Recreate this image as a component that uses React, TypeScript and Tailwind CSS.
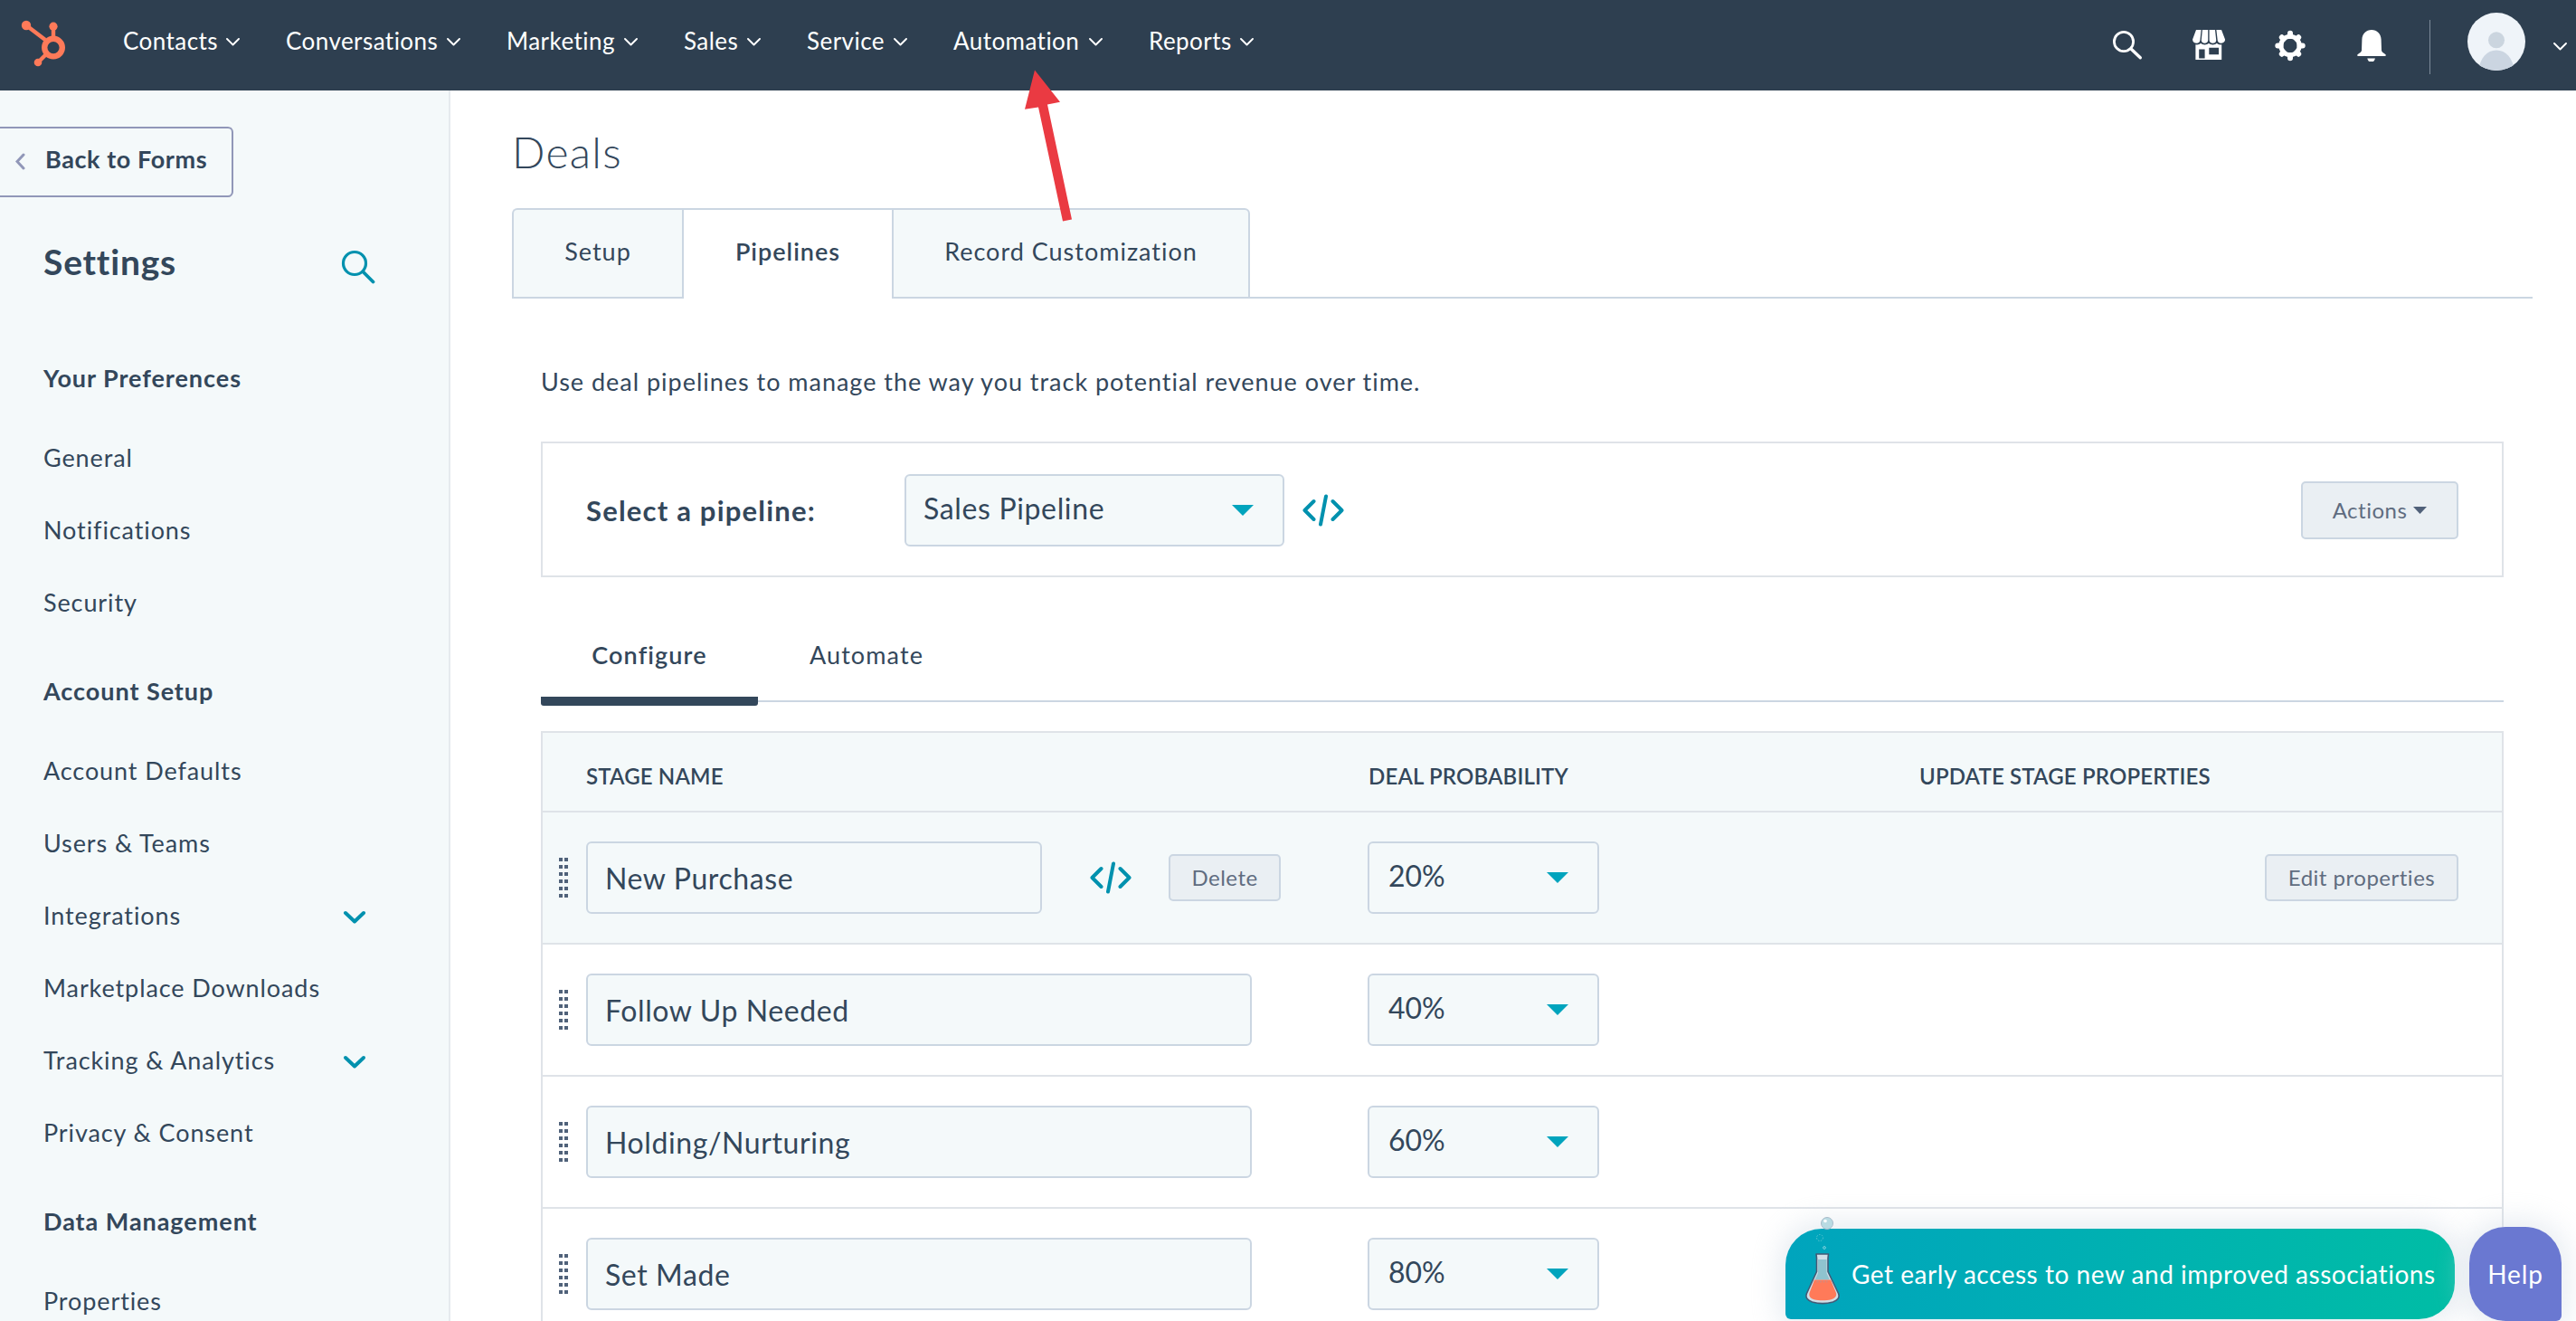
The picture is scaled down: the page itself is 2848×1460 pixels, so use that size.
import { ReactNode } from 'react';

const navItems = [
    { label: 'Contacts', className: 'w-[129px]' },
    { label: 'Conversations', className: 'w-[193px]' },
    { label: 'Marketing', className: 'w-[145px]' },
    { label: 'Sales', className: 'w-[85px]' },
    { label: 'Service', className: 'w-[111px]' },
    { label: 'Automation', className: 'w-[165px]' },
    { label: 'Reports', className: 'w-[116px]' },
];

const sidebarSections = [
    {
        title: 'Your Preferences',
        items: [{ label: 'General' }, { label: 'Notifications' }, { label: 'Security' }],
    },
    {
        title: 'Account Setup',
        items: [
            { label: 'Account Defaults' },
            { label: 'Users & Teams' },
            { label: 'Integrations', expandable: true },
            { label: 'Marketplace Downloads' },
            { label: 'Tracking & Analytics', expandable: true },
            { label: 'Privacy & Consent' },
        ],
    },
    {
        title: 'Data Management',
        items: [{ label: 'Properties' }],
    },
];

const stages = [
    { name: 'New Purchase', probability: '20%', active: true },
    { name: 'Follow Up Needed', probability: '40%', active: false },
    { name: 'Holding/Nurturing', probability: '60%', active: false },
    { name: 'Set Made', probability: '80%', active: false },
];

function Logo() {
    return (
        <svg className="h-[56px] w-[56px] shrink-0" viewBox="0 0 56 56" fill="none">
            <g stroke="#ff7a59" strokeWidth="4.4">
                <path d="M9 8 30 24" />
                <path d="M39 9v12" />
                <path d="m22 49 8-8" />
            </g>
            <circle cx="39" cy="32.6" r="9.8" stroke="#ff7a59" strokeWidth="6.4" />
            <circle cx="9" cy="8" r="5.2" fill="#ff7a59" />
            <circle cx="39" cy="9.2" r="4.6" fill="#ff7a59" />
            <circle cx="22" cy="49" r="4.3" fill="#ff7a59" />
        </svg>
    );
}

function NavChevron() {
    return (
        <svg className="mt-[3px] h-[9px] w-[15px] shrink-0" viewBox="0 0 15 9" fill="none" stroke="#fff" strokeWidth="1.9" strokeLinecap="round" strokeLinejoin="round">
            <path d="m1 1 6.5 6.5L14 1" />
        </svg>
    );
}

function StoreIcon() {
    return (
        <svg className="size-[36px]" viewBox="0 0 36 36">
            <path
                fill="#fff"
                d="M4 1h5.6L8.4 12.5c-.2 1.8-1.6 3.3-3.6 3.3-2.8 0-4.9-1.8-4.7-4.4zM10.9 1h6.3v11.3c0 2-1.5 3.5-3.7 3.5-2.3 0-3.8-1.5-3.7-3.5zM18.6 1h6.4l1.2 11.3c.1 2-1.5 3.5-3.8 3.5s-3.8-1.5-3.8-3.5zM26.4 1H32l4 10.4c.3 2.6-2 4.4-4.6 4.4-2 0-3.5-1.5-3.7-3.3z"
            />
            <path
                fill="#fff"
                fillRule="evenodd"
                d="M3.4 17.3c2.3.4 4.3-.1 5.7-1.6 2.3 2.3 6.6 2.3 8.9 0 2.3 2.3 6.6 2.3 8.9 0 1.4 1.5 3.4 2 5.3 1.6V34H3.4zM7.2 22.4V32.6h6.4V22.4zM18.3 20.8v7.4H29v-7.4z"
            />
        </svg>
    );
}

function GearIcon() {
    return (
        <svg className="size-[36px]" viewBox="0 0 36 36" fill="none" stroke="#fff">
            <circle cx="18" cy="18.5" r="10.2" strokeWidth="5" />
            <path
                d="M18 8V4.8M18 29v3.2M7.5 18.5H4.3M28.5 18.5h3.2M10.6 11.1 8.8 9.3M25.4 11.1l1.8-1.8M10.6 25.9l-1.8 1.8M25.4 25.9l1.8 1.8"
                strokeWidth="6"
                strokeLinecap="round"
            />
        </svg>
    );
}

function BellIcon() {
    return (
        <svg className="size-[36px]" viewBox="0 0 36 36" fill="#fff">
            <path d="M18 1c6 0 10.4 4.4 10.6 10.5L29 23.500c.1 1.3.7 2 1.8 2.8l2.4 1.800c1.2 1 .8 1.900-.6 1.900H3.400c-1.400 0-1.800-.9-.6-1.900l2.400-1.800c1.100-.8 1.700-1.500 1.800-2.800l.4-12C7.600 5.400 12 1 18 1z" />
            <path d="M13.300 32.400h8.600c-.4 2.400-2 4.200-4.300 4.200s-3.900-1.800-4.300-4.200z" />
        </svg>
    );
}

function Avatar() {
    return (
        <svg className="size-[64px] shrink-0" viewBox="0 0 64 64">
            <clipPath id="avatar">
                <circle cx="32" cy="32" r="32" />
            </clipPath>
            <g clipPath="url(#avatar)">
                <rect width="64" height="64" fill="#eff4f9" />
                <circle cx="32" cy="30.3" r="9" fill="#cbd5df" />
                <path d="M12 64c2-14 9.5-22.6 20-22.6S50 50 52 64z" fill="#cbd5e1" />
            </g>
        </svg>
    );
}

function CodeIcon() {
    return (
        <svg className="h-[36px] w-[46px] shrink-0" viewBox="0 0 46 36" fill="none" stroke="#0091ae" strokeWidth="4" strokeLinecap="round" strokeLinejoin="round">
            <path d="M12.5 8 2.5 18l10 10M33.5 8l10 10-10 10M26 2.5l-6 31" />
        </svg>
    );
}

function Triangle() {
    return (
        <svg className="h-[12px] w-[24px] shrink-0" viewBox="0 0 24 12" fill="#00a4bd">
            <path d="M0 0h24L12 12z" />
        </svg>
    );
}

function DragHandle() {
    return (
        <div className="grid shrink-0 grid-cols-2 gap-x-[2px] gap-y-1">
            {Array.from({ length: 12 }, (_, i) => (
                <span key={i} className="h-1 w-1 bg-[#50627a]" />
            ))}
        </div>
    );
}

function Flask() {
    return (
        <svg className="-mt-[30px] h-[100px] w-[40px] shrink-0" viewBox="0 0 40 100">
            <circle cx="25" cy="9" r="6.5" fill="#b9dbe3" stroke="#a9bccb" strokeWidth="1" />
            <circle cx="23" cy="6.5" r="1.8" fill="#fff" />
            <circle cx="17" cy="25" r="3.5" fill="none" stroke="#5cc4d3" strokeWidth="1" strokeDasharray="1.5 1.5" />
            <circle cx="22" cy="36" r="1.4" fill="none" stroke="#7fd0dc" strokeWidth="1" />
            <path
                d="M13 43h13.500l-.5 4.500v15l11.500 24c2 5-1.500 8-6 9.500-7 2-16 2-23 0-4.500-1.500-8-4.500-6-9.500l11-24v-15z"
                fill="#cfdfe8"
                stroke="#425b76"
                strokeWidth="1.6"
                strokeLinejoin="round"
            />
            <path d="M15 49h9.5v15l3.500 7.500H11.500L15 64z" fill="#8fc3cf" />
            <path d="M11 71.500h18l6 14.500c1 4-2 6.300-5.500 7.200-5.500 1.300-13.500 1.300-19 0C7 92.300 4.500 90 5.500 86z" fill="#ff7a59" />
            <path d="M13.500 73.500h12" stroke="#d9877a" strokeWidth="2" strokeDasharray="2 1.5" />
        </svg>
    );
}

function Header() {
    return (
        <header className="flex h-[100px] shrink-0 items-center bg-[#2e3f50] pr-[10px] pl-5 text-white">
            <div className="flex h-full items-start pt-5">
                <Logo />
            </div>
            <nav className="ml-[60px] flex items-center gap-[51px] pb-[11px]">
                {navItems.map((item) => (
                    <div key={item.label} className={`flex items-center justify-between whitespace-nowrap ${item.className}`}>
                        <span className="text-[26px] leading-10 tracking-[0.45px]">{item.label}</span>
                        <NavChevron />
                    </div>
                ))}
            </nav>
            <div className="ml-auto flex items-center gap-[54px]">
                <svg className="size-[36px]" viewBox="0 0 36 36" fill="none" stroke="#fff" strokeLinecap="round">
                    <circle cx="14" cy="14" r="10.6" strokeWidth="2.8" />
                    <path d="m22.3 22.3 10 9.5" strokeWidth="3.4" />
                </svg>
                <StoreIcon />
                <GearIcon />
                <BellIcon />
            </div>
            <div className="mt-1 ml-[46px] h-[60px] w-px bg-[#7c8a99]" />
            <div className="ml-[41px] pb-2">
                <Avatar />
            </div>
            <div className="ml-[31px]">
                <NavChevron />
            </div>
        </header>
    );
}

function Sidebar() {
    return (
        <aside className="w-[498px] shrink-0 border-r-2 border-[#e6eaee] bg-[#f4f9fa] pt-10">
            <button className="flex h-[78px] w-[258px] items-center rounded-r-[6px] border-2 border-l-0 border-[#9197b8] pb-[5px] pl-[17px] text-[27px] font-bold tracking-[0.6px] whitespace-nowrap">
                <svg className="mt-1 mr-[22px] h-[19px] w-[11px] shrink-0" viewBox="0 0 11 19" fill="none" stroke="#9197b8" strokeWidth="3" strokeLinecap="round">
                    <path d="M9 2 2 9.5 9 17" />
                </svg>
                Back to Forms
            </button>
            <div className="mt-[41px] flex h-[60px] items-center justify-between pr-[81px] pl-12">
                <h1 className="text-[39px] leading-[60px] font-bold tracking-[0.8px]">Settings</h1>
                <svg className="mt-3 size-[38px]" viewBox="0 0 38 38" fill="none" stroke="#0091ae" strokeLinecap="round">
                    <circle cx="15" cy="15" r="12.5" strokeWidth="3.2" />
                    <path d="m24.5 24.5 11 11" strokeWidth="3.8" />
                </svg>
            </div>
            <div className="mt-[59px] pr-[91px] pl-12 text-[27px] leading-[80px]">
                {sidebarSections.map((section) => (
                    <section key={section.title} className="mb-[18px]">
                        <h2 className="mb-2 font-bold tracking-[0.95px]">{section.title}</h2>
                        <ul className="tracking-[0.9px]">
                            {section.items.map((item) => (
                                <li key={item.label} className="flex items-center justify-between whitespace-nowrap">
                                    {item.label}
                                    {'expandable' in item && (
                                        <svg className="mt-[3px] h-[16px] w-[26px]" viewBox="0 0 26 16" fill="none" stroke="#0091ae" strokeWidth="4" strokeLinecap="round" strokeLinejoin="round">
                                            <path d="m3 3 10 9.5L23 3" />
                                        </svg>
                                    )}
                                </li>
                            ))}
                        </ul>
                    </section>
                ))}
            </div>
        </aside>
    );
}

function SmallButton({ children, className }: { children: ReactNode; className: string }) {
    return (
        <button
            className={`flex items-center justify-center rounded-[5px] border-2 border-[#cbd6e2] bg-[#eaeff3] text-[24px] tracking-[0.5px] whitespace-nowrap text-[#5f6c80] ${className}`}
        >
            {children}
        </button>
    );
}

function PipelinePicker() {
    return (
        <div className="mt-[46px] flex h-[150px] items-center border-2 border-[#dfe3e8] pt-[2px] pr-12 pl-12">
            <span className="w-[352px] pt-px text-[31px] font-bold tracking-[1.2px]">Select a pipeline:</span>
            <div className="flex h-20 w-[420px] items-center justify-between rounded-[6px] border-2 border-[#cbd6e2] bg-[#f4f9fa] pr-8 pl-[19px]">
                <span className="pb-[4px] text-[32px] tracking-[0.65px]">Sales Pipeline</span>
                <Triangle />
            </div>
            <div className="ml-5">
                <CodeIcon />
            </div>
            <SmallButton className="ml-auto h-16 w-[174px] gap-[7px]">
                Actions
                <svg className="h-2 w-[15px]" viewBox="0 0 15 8" fill="#506079">
                    <path d="M0 0h15L7.5 8z" />
                </svg>
            </SmallButton>
        </div>
    );
}

function StageTable() {
    return (
        <div className="mt-8 border-2 border-b-0 border-[#dfe3e8]">
            <div className="flex h-[88px] items-center border-b-2 border-[#dfe3e8] bg-[#f4f9fa] pt-[9px] pl-12 text-[24px] font-semibold tracking-[0.15px]">
                <span className="w-[865px]">STAGE NAME</span>
                <span className="w-[609px]">DEAL PROBABILITY</span>
                <span>UPDATE STAGE PROPERTIES</span>
            </div>
            {stages.map((stage) => (
                <div
                    key={stage.name}
                    className={`flex h-[146px] items-center border-b-2 border-[#dfe3e8] pr-12 pl-[18px] ${stage.active ? 'bg-[#f4f9fa]' : 'bg-white'}`}
                >
                    <DragHandle />
                    <div className="ml-5 flex w-[864px] items-center">
                        <div
                            className={`flex h-20 items-center rounded-[6px] border-2 border-[#cbd6e2] bg-[#f4f9fa] pt-px pl-[19px] text-[32px] tracking-[0.6px] ${stage.active ? 'w-[504px]' : 'w-[736px]'}`}
                        >
                            {stage.name}
                        </div>
                        {stage.active && (
                            <>
                                <div className="ml-[53px]">
                                    <CodeIcon />
                                </div>
                                <SmallButton className="ml-[41px] h-[52px] w-[124px] pb-px">Delete</SmallButton>
                            </>
                        )}
                    </div>
                    <div className="flex h-20 w-[256px] items-center justify-between rounded-[6px] border-2 border-[#cbd6e2] bg-[#f4f9fa] pr-8 pl-[21px]">
                        <span className="pb-[4px] text-[32px]">{stage.probability}</span>
                        <Triangle />
                    </div>
                    {stage.active && <SmallButton className="ml-auto h-[52px] w-[214px] pb-px">Edit properties</SmallButton>}
                </div>
            ))}
        </div>
    );
}

export default function App() {
    return (
        <div className="relative flex h-[1460px] w-full flex-col overflow-hidden bg-white font-['Lato',sans-serif] text-[#33475b]">
            <Header />
            <div className="flex min-h-0 flex-1">
                <Sidebar />
                <main className="min-w-0 flex-1 pt-8 pr-12 pl-[68px]">
                    <h1 className="text-[48px] leading-[72px] font-light tracking-[1.3px]">Deals</h1>
                    <div className="mt-[26px] flex h-[100px] text-[27px] tracking-[1px]">
                        <div className="flex w-[188px] items-center justify-center rounded-tl-[6px] border-2 border-r-0 border-[#cbd6e2] bg-[#f4f9fa] pb-[3px]">Setup</div>
                        <div className="flex w-[232px] items-center justify-center border-t-2 border-l-2 border-[#cbd6e2] pb-[5px] font-semibold">Pipelines</div>
                        <div className="flex w-[396px] items-center justify-center rounded-tr-[6px] border-2 border-[#cbd6e2] bg-[#f4f9fa] pb-[3px]">Record Customization</div>
                        <div className="flex-1 border-b-2 border-[#cbd6e2]" />
                    </div>
                    <div className="mr-8 ml-8">
                        <p className="mt-[72px] text-[27px] leading-10 tracking-[0.98px]">Use deal pipelines to manage the way you track potential revenue over time.</p>
                        <PipelinePicker />
                        <div className="flex h-[138px] border-b-2 border-[#cbd6e2] text-center text-[27px] leading-10 tracking-[1.1px]">
                            <div className="h-[142px] w-[240px] rounded-[3px] border-b-10 border-[#33475b] pt-[66px] font-semibold">Configure</div>
                            <div className="w-[240px] pt-[66px]">Automate</div>
                        </div>
                        <StageTable />
                    </div>
                </main>
            </div>

            {/* floating promo + help */}
            <div className="absolute right-4 bottom-0 flex items-start gap-4 text-[28px] text-white">
                <div className="mt-[2px] flex h-[100px] w-[740px] items-center rounded-[40px] rounded-bl-[6px] bg-linear-to-r from-[#00a4bd] to-[#00bda5] pl-[21px] whitespace-nowrap shadow-[0_0_30px_8px_rgba(203,214,226,0.45)]">
                    <Flask />
                    <span className="ml-3 tracking-[0.53px]">Get early access to new and improved associations</span>
                </div>
                <div className="flex h-[104px] w-[102px] items-center justify-center rounded-[40px] rounded-br-[6px] bg-[#6a78d1] tracking-[0.9px] shadow-[0_0_30px_8px_rgba(203,214,226,0.45)]">Help</div>
            </div>

            {/* pointer to the Automation menu */}
            <svg className="absolute top-[76px] left-[1130px] h-[170px] w-[60px]" viewBox="0 0 60 170" fill="#ea3a42">
                <path d="M14 1.5 42 36.7l-14 2.8L55 166.500l-10 2L18 42.500 3 44.700z" />
            </svg>
        </div>
    );
}
